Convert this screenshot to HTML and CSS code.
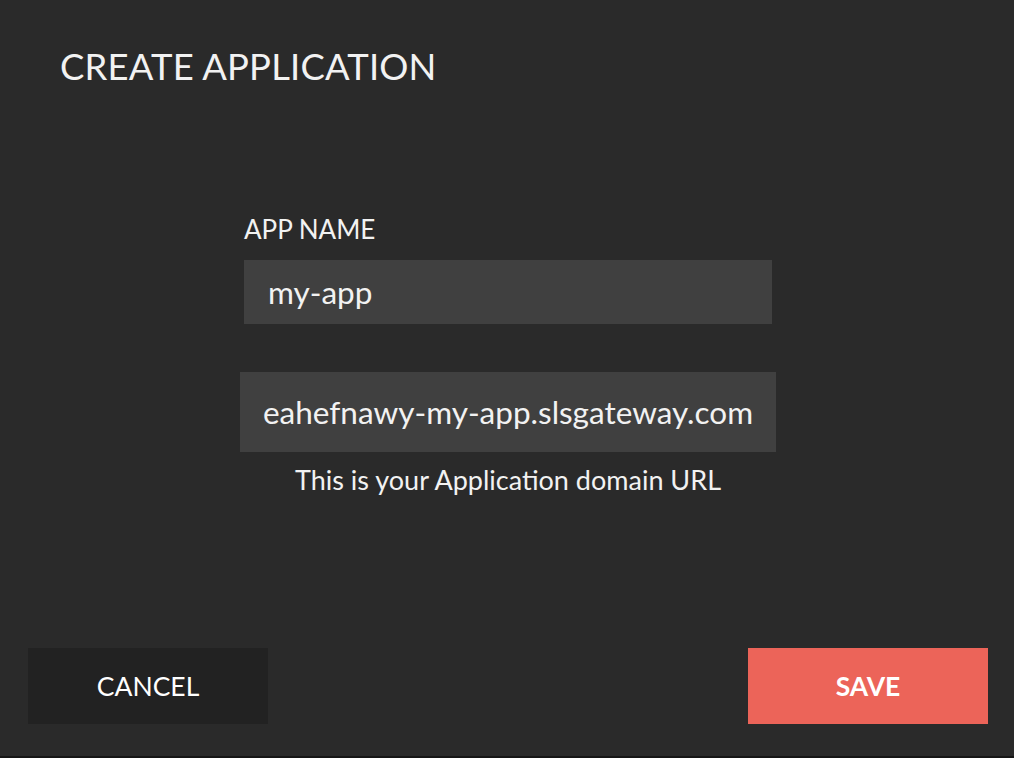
FILE: index.html
```html
<!DOCTYPE html>
<html>
<head>
<meta charset="utf-8">
<link rel="stylesheet" href="styles.css">
</head>
<body>
<div class="modal">
  <h1 class="title">CREATE APPLICATION</h1>
  <div class="form">
    <label class="label">APP NAME</label>
    <div class="input name-input">my-app</div>
    <div class="input domain-input">eahefnawy-my-app.slsgateway.com</div>
    <p class="caption">This is your Application domain URL</p>
  </div>
  <div class="actions">
    <button class="btn cancel">CANCEL</button>
    <button class="btn save">SAVE</button>
  </div>
</div>
<div class="backdrop"></div>
</body>
</html>
```
FILE: styles.css
```css
html, body {
  margin: 0;
  padding: 0;
  background: #1d1d1d;
}
body {
  font-family: Lato, "Open Sans", sans-serif;
  color: #f2f2f2;
  width: 1014px;
  height: 758px;
  overflow: hidden;
}
.modal {
  height: 756px;
  background: #2a2a2a;
  display: flex;
  flex-direction: column;
  box-sizing: border-box;
}
.title {
  margin: 0;
  padding: 44px 0 0 60px;
  font-size: 36.4px;
  font-weight: 400;
  line-height: 44px;
  letter-spacing: 0.2px;
}
.form {
  display: flex;
  flex-direction: column;
  align-items: center;
  margin-top: 126px;
  padding-left: 2px;
}
.label {
  width: 528px;
  font-size: 26px;
  line-height: 30px;
  margin-bottom: 16px;
}
.input {
  background: #404040;
  box-sizing: border-box;
  display: flex;
  align-items: center;
}
.name-input {
  width: 528px;
  height: 64px;
  padding-left: 24px;
  font-size: 31.5px;
}
.domain-input {
  width: 536px;
  height: 80px;
  margin-top: 48px;
  justify-content: center;
  font-size: 31.5px;
}
.caption {
  margin: 12px 0 0;
  font-size: 27px;
  line-height: 32px;
}
.actions {
  margin-top: auto;
  display: flex;
  justify-content: space-between;
  padding: 0 26px 32px 28px;
}
.btn {
  width: 240px;
  height: 76px;
  border: 0;
  font-family: Lato, "Open Sans", sans-serif;
  font-size: 26.5px;
  color: #ffffff;
  padding: 0;
}
.cancel {
  background: #222222;
}
.save {
  background: #ec6459;
  font-weight: 700;
}
.backdrop {
  height: 2px;
  background: #161616;
}
```
